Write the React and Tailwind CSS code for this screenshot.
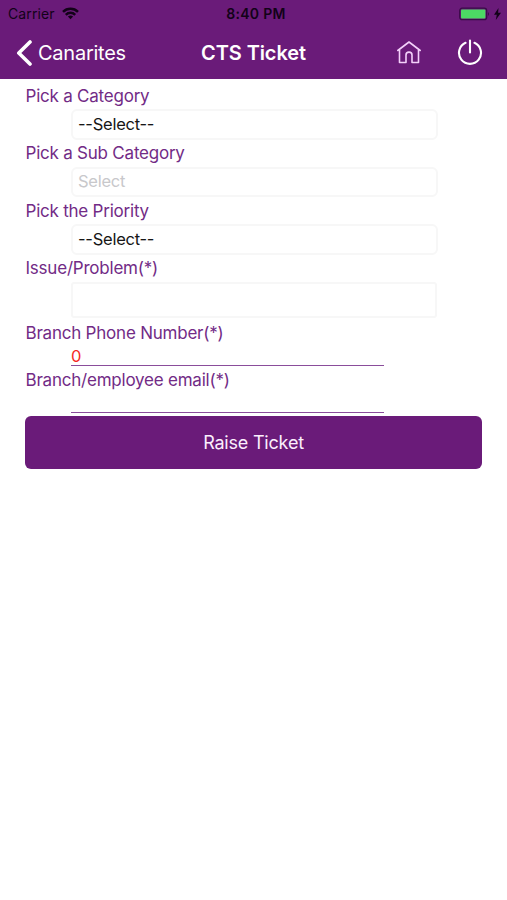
import React from "react";

function StatusBar() {
  return (
    <div className="flex h-[27px] items-center justify-between pl-2 pr-[6px] text-[#120218]">
      <div className="flex w-[120px] items-center gap-[7px]">
        <span className="w-[47px] whitespace-nowrap text-[14px] tracking-[0.1px]">Carrier</span>
        <svg width="17" height="13" viewBox="0 0 17 13" fill="none" stroke="currentColor" strokeWidth="2.5">
          <path d="M1 4.8a10.7 10.7 0 0 1 15 0" />
          <path d="M3.8 7.8a6.7 6.7 0 0 1 9.4 0" />
          <path d="M8.5 12.2 5.9 9.6a3.8 3.8 0 0 1 5.2 0z" fill="currentColor" stroke="none" />
        </svg>
      </div>
      <span className="whitespace-nowrap pl-[3px] text-[14px] font-semibold tracking-[0.3px]">8:40 PM</span>
      <div className="flex w-[120px] items-center justify-end gap-1">
        <svg width="31" height="14" viewBox="0 0 31 14">
          <rect x="0.7" y="1.2" width="27" height="11.5" rx="2.5" fill="none" stroke="#3a0b48" strokeWidth="1.2" />
          <rect x="2" y="2.5" width="24.4" height="9" rx="1" fill="#4cd964" />
          <path d="M29 5v4q2-2 0-4z" fill="#3a0b48" />
        </svg>
        <svg width="7" height="12" viewBox="0 0 7 12" fill="currentColor">
          <path d="M4.5 0 0 6.8h2.8L1.8 12 7 4.8H4.1z" />
        </svg>
      </div>
    </div>
  );
}

function NavBar() {
  return (
    <div className="flex h-[52px] items-center justify-between pl-4 pr-6 text-white">
      <button className="flex w-[150px] items-center gap-[6px]">
        <svg width="16" height="26" viewBox="0 0 16 26" fill="none" stroke="currentColor" strokeWidth="3.6" strokeLinecap="round" strokeLinejoin="round">
          <path d="M14 2 2.8 13 14 24" />
        </svg>
        <span className="whitespace-nowrap text-[20px] tracking-[-0.25px]">Canarites</span>
      </button>
      <h1 className="whitespace-nowrap text-[20px] font-semibold tracking-[-0.1px]">CTS Ticket</h1>
      <div className="flex w-[142px] items-center justify-end gap-[35px] pb-[3px]">
        <svg width="26" height="24" viewBox="0 0 26 24" fill="none" stroke="#f3d0fa" strokeWidth="1.6" strokeLinecap="round" strokeLinejoin="round">
          <path d="M1.8 10.5 13 2l11.2 8.5" />
          <path d="M3.5 10v12.5h6.5V15c0-3.8 6-3.8 6 0v7.5h6.5V10" />
        </svg>
        <svg width="26" height="26" viewBox="0 0 26 26" fill="none" stroke="currentColor" strokeWidth="2.1" strokeLinecap="round">
          <path d="M13 1.5v12M8.5 3.8a11 11 0 1 0 9 0" />
        </svg>
      </div>
    </div>
  );
}

function Label({ className = "h-[27px]", children }) {
  return (
    <label className={`flex items-center whitespace-nowrap pt-[2px] text-[17px] tracking-[-0.22px] text-[#722b86] ${className}`}>
      {children}
    </label>
  );
}

function Picker({ value, placeholder }) {
  return (
    <div className="ml-[45px] flex h-[30.5px] w-[367px] items-center rounded-[6px] border-2 border-[#f7f7f7] pl-[5.5px] text-[16.5px] tracking-[-0.25px]">
      {value ? <span className="text-[#161616]">{value}</span> : <span className="text-[#c8c8cb]">{placeholder}</span>}
    </div>
  );
}

export default function App() {
  return (
    <div className="min-h-screen w-full bg-white font-['Inter',sans-serif]">
      <header className="h-[79px] bg-[#6a1b79]">
        <StatusBar />
        <NavBar />
      </header>
      <main className="flex flex-col px-[25.5px] pt-[3px]">
        <Label>Pick a Category</Label>
        <Picker value="--Select--" />
        <Label>Pick a Sub Category</Label>
        <Picker placeholder="Select" />
        <Label>Pick the Priority</Label>
        <Picker value="--Select--" />
        <Label>Issue/Problem(*)</Label>
        <div className="ml-[45px] h-9 w-[366px] rounded-[3px] border-2 border-[#f7f7f7]" />
        <Label className="h-[30px]">Branch Phone Number(*)</Label>
        <div className="ml-[45px] flex h-[18.5px] w-[313px] items-center border-b border-[#8a4d9b] pl-[0.5px] text-[16.5px] text-[#f52a25]">0</div>
        <Label>Branch/employee email(*)</Label>
        <div className="ml-[45px] h-[19.5px] w-[313px] border-b border-[#8a4d9b]" />
        <button className="-mx-[0.5px] mt-[3px] h-[53.5px] rounded-[6px] bg-[#6a1b79] text-[18px] tracking-[-0.2px] text-[#fbeffd]">Raise Ticket</button>
      </main>
    </div>
  );
}
